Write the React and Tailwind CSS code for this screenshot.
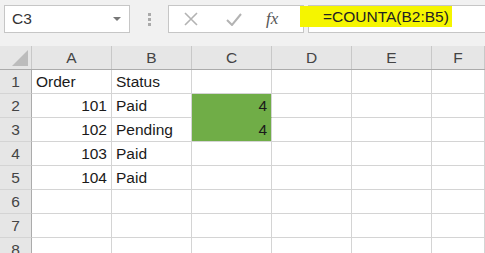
import React from 'react'

const cols = ['A', 'B', 'C', 'D', 'E', 'F']
const rows = [
  { n: 1, cells: [{ t: 'Order' }, { t: 'Status' }] },
  { n: 2, cells: [{ t: '101', r: true }, { t: 'Paid' }, { t: '4', r: true, g: true, gb: true }] },
  { n: 3, cells: [{ t: '102', r: true }, { t: 'Pending' }, { t: '4', r: true, g: true }] },
  { n: 4, cells: [{ t: '103', r: true }, { t: 'Paid' }] },
  { n: 5, cells: [{ t: '104', r: true }, { t: 'Paid' }] },
  { n: 6, cells: [] },
  { n: 7, cells: [] },
  { n: 8, cells: [] },
]

function Cell({ c, last }) {
  const base = last ? 'flex-1' : 'w-[80px] shrink-0'
  return (
    <div
      className={`${base} h-full border-r border-b border-r-[#d4d4d4] px-[4px] flex items-center ${
        c && c.g ? 'bg-[#70ad47]' : 'bg-white'
      } ${c && c.gb ? 'border-b-[#70ad47]' : 'border-b-[#d4d4d4]'} ${
        c && c.r ? 'justify-end' : 'justify-start'
      }`}
    >
      {c ? c.t : ''}
    </div>
  )
}

export default function App() {
  return (
    <div
      className="w-[485px] h-[253px] overflow-hidden bg-white text-[15.5px] text-[#1a1a1a] relative"
      style={{ fontFamily: '"Liberation Sans", Arial, sans-serif' }}
    >
      {/* formula bar */}
      <div className="h-[46px] bg-[#f1f1f1] flex items-start pt-[5px] pl-[4px]">
        <div className="w-[126px] h-[28px] bg-white border border-[#c6c6c6] flex items-center pl-[7px] pr-[8px] justify-between">
          <span className="text-[#333]">C3</span>
          <span className="w-0 h-0 border-l-[4px] border-r-[4px] border-t-[4px] border-l-transparent border-r-transparent border-t-[#777]" />
        </div>
        <div className="w-[38px] h-[28px] flex flex-col items-center justify-center gap-[2px]">
          <span className="w-[3px] h-[3px] bg-[#aaa]" />
          <span className="w-[3px] h-[3px] bg-[#aaa]" />
          <span className="w-[3px] h-[3px] bg-[#aaa]" />
        </div>
        <div className="w-[136px] h-[28px] bg-white border border-[#c6c6c6] flex items-center">
          <svg width="14" height="14" viewBox="0 0 14 14" className="ml-[15px]">
            <path d="M1 1 L13 13 M13 1 L1 13" stroke="#b3b3b3" strokeWidth="1.6" fill="none" />
          </svg>
          <svg width="16" height="14" viewBox="0 0 16 14" className="ml-[28px]">
            <path d="M1 8 L6 13 L15 2" stroke="#b3b3b3" strokeWidth="2" fill="none" />
          </svg>
          <span
            className="ml-[24px] italic text-[#555] text-[17px]"
            style={{ fontFamily: '"Liberation Serif", serif' }}
          >
            fx
          </span>
        </div>
        <div className="flex-1 h-[28px] bg-white border-y border-l border-[#c6c6c6] ml-[4px]" />
      </div>
      <span className="absolute left-[300px] top-[6px] w-[152px] h-[21px] bg-[#f5f500] flex items-center pl-[23px] text-[#222] text-[15.5px]">
        =COUNTA(B2:B5)
      </span>

      {/* column headers */}
      <div className="h-[24px] flex bg-[#e6e6e6] border-b border-[#ababab] text-[#444]">
        <div className="w-[32px] shrink-0 h-full border-r border-[#c8c8c8] flex items-end justify-end pr-[3px] pb-[3px]">
          <svg width="16" height="16" viewBox="0 0 16 16">
            <polygon points="16,0 16,16 0,16" fill="#bcbcbc" />
          </svg>
        </div>
        {cols.map((c, i) => (
          <div
            key={c}
            className={`${i === cols.length - 1 ? 'flex-1' : 'w-[80px] shrink-0'} h-full border-r border-[#c8c8c8] flex items-center justify-center`}
          >
            {c}
          </div>
        ))}
      </div>

      {/* rows */}
      {rows.map((r) => (
        <div key={r.n} className="h-[24px] flex">
          <div className="w-[32px] shrink-0 h-full bg-[#e6e6e6] border-r border-b border-r-[#ababab] border-b-[#d4d4d4] flex items-center justify-center text-[#444]">
            {r.n}
          </div>
          {cols.map((c, i) => (
            <Cell key={c} c={r.cells[i]} last={i === cols.length - 1} />
          ))}
        </div>
      ))}
    </div>
  )
}
